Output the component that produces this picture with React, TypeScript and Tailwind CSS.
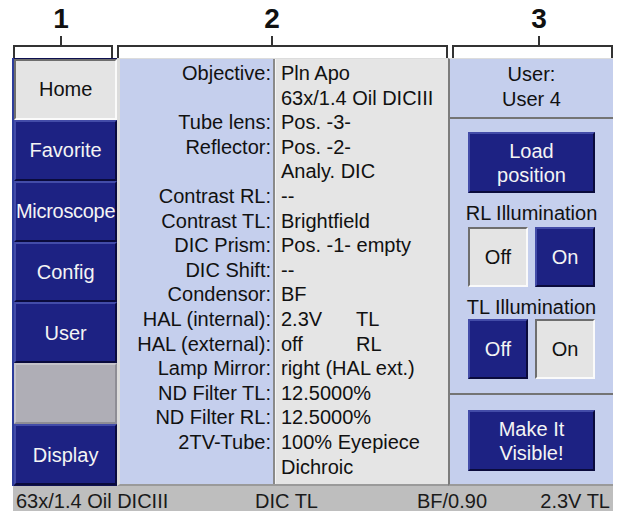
import React from 'react';

const blueBtn =
  'bg-[#1d2283] text-[#f4f4f4] border-2 border-t-[#434ca8] border-l-[#434ca8] border-b-[#0a0b3c] border-r-[#0a0b3c]';
const sunkenBtn =
  'bg-[#e4e4e4] text-[#111] border-2 border-t-[#6e6e6e] border-l-[#6e6e6e] border-b-[#fafafa] border-r-[#fafafa]';

type Row = { label: string; value: string; extra?: string };

const rows: Row[] = [
  { label: 'Objective:', value: 'Pln Apo' },
  { label: '', value: '63x/1.4 Oil DICIII' },
  { label: 'Tube lens:', value: 'Pos. -3-' },
  { label: 'Reflector:', value: 'Pos. -2-' },
  { label: '', value: 'Analy. DIC' },
  { label: 'Contrast RL:', value: '--' },
  { label: 'Contrast TL:', value: 'Brightfield' },
  { label: 'DIC Prism:', value: 'Pos. -1- empty' },
  { label: 'DIC Shift:', value: '--' },
  { label: 'Condensor:', value: 'BF' },
  { label: 'HAL (internal):', value: '2.3V', extra: 'TL' },
  { label: 'HAL (external):', value: 'off', extra: 'RL' },
  { label: 'Lamp Mirror:', value: 'right (HAL ext.)' },
  { label: 'ND Filter TL:', value: '12.5000%' },
  { label: 'ND Filter RL:', value: '12.5000%' },
  { label: '2TV-Tube:', value: '100% Eyepiece' },
  { label: '', value: 'Dichroic' },
];

const navItems = ['Home', 'Favorite', 'Microscope', 'Config', 'User', '', 'Display'];

const App: React.FC = () => {
  return (
    <div className="w-[623px] h-[511px] bg-white overflow-hidden font-['Liberation_Sans',Arial,sans-serif] text-[20px] text-[#111]">
      {/* annotation brackets */}
      <div className="h-[58px] flex pl-[13px] font-bold text-[28px] leading-[28px] text-[#111]">
        <div className="w-[100px] flex flex-col">
          <div className="h-[36px] pt-[5px] ml-[48px] w-0 flex justify-center">1</div>
          <div className="h-[9px] w-[2px] ml-[47px] bg-[#333]" />
          <div className="h-[13px] border-t-2 border-x-2 border-[#333]" />
        </div>
        <div className="w-[4px]" />
        <div className="w-[331px] flex flex-col">
          <div className="h-[36px] pt-[5px] ml-[155px] w-0 flex justify-center">2</div>
          <div className="h-[9px] w-[2px] ml-[154px] bg-[#333]" />
          <div className="h-[13px] border-t-2 border-x-2 border-[#333]" />
        </div>
        <div className="w-[4px]" />
        <div className="w-[161px] flex flex-col">
          <div className="h-[36px] pt-[5px] ml-[87px] w-0 flex justify-center">3</div>
          <div className="h-[9px] w-[2px] ml-[86px] bg-[#333]" />
          <div className="h-[13px] border-t-2 border-x-2 border-[#333]" />
        </div>
      </div>

      {/* screen */}
      <div className="ml-[12px] w-[601px] flex flex-col">
        <div className="h-[428px] flex">
          {/* left nav */}
          <div className="w-[105px] border-l-2 border-[#2c3c9c] bg-[#0e1050] py-[1px] grid grid-rows-7">
            {navItems.map((item, i) =>
              item === '' ? (
                <div key={i} className="bg-[#afaeb6] border-2 border-t-[#c4c3ca] border-l-[#c4c3ca] border-b-[#8e8d95] border-r-[#8e8d95]" />
              ) : (
                <div
                  key={item}
                  className={`flex items-center justify-center whitespace-nowrap ${item === 'Home' ? sunkenBtn : blueBtn} ${item === 'Microscope' ? 'tracking-[-0.3px]' : ''}`}
                >
                  {item}
                </div>
              )
            )}
          </div>

          {/* status table */}
          <div className="w-[331px] flex border-l-[3px] border-t border-b-2 border-l-[#dcdcdc] border-t-[#dcdcdc] border-b-[#9a9a9a] leading-[24.6px]">
            <div className="w-[153px] bg-[#c5cfed] pt-[2px] pr-[2px] text-right whitespace-nowrap">
              {rows.map((r, i) => (
                <div key={i} className="h-[24.6px]">{r.label}</div>
              ))}
            </div>
            <div className="w-[2px] bg-[#8a8a8a]" />
            <div className="w-[1px] bg-[#f5f5f5]" />
            <div className="flex-1 bg-[#e5e5e5] pt-[2px] pl-[5px] whitespace-nowrap">
              {rows.map((r, i) => (
                <div key={i} className="h-[24.6px] flex">
                  <span className={r.extra ? 'w-[75px]' : ''}>{r.value}</span>
                  {r.extra && <span>{r.extra}</span>}
                </div>
              ))}
            </div>
          </div>

          {/* right panel */}
          <div className="w-[165px] flex flex-col bg-[#c5cfed] border-l-2 border-t border-b-2 border-l-[#7c7c7c] border-t-[#dcdcdc] border-b-[#9a9a9a] leading-[24.6px] text-center">
            <div className="h-[58px] pt-[3px]">
              <div>User:</div>
              <div>User 4</div>
            </div>
            <div className="h-[2px] bg-[#747474]" />
            <div className="h-[274px] flex flex-col items-center pt-[13px]">
              <div className={`w-[127px] h-[61px] flex flex-col items-center justify-center leading-[24px] ${blueBtn}`}>
                <span>Load</span>
                <span>position</span>
              </div>
              <div className="mt-[8px] h-[24px] leading-[24px] whitespace-nowrap">RL Illumination</div>
              <div className="mt-[2px] flex gap-[7px]">
                <div className={`w-[60px] h-[60px] flex items-center justify-center ${sunkenBtn}`}>Off</div>
                <div className={`w-[60px] h-[60px] flex items-center justify-center ${blueBtn}`}>On</div>
              </div>
              <div className="mt-[9px] h-[23px] leading-[23px] whitespace-nowrap">TL Illumination</div>
              <div className="flex gap-[7px]">
                <div className={`w-[60px] h-[60px] flex items-center justify-center ${blueBtn}`}>Off</div>
                <div className={`w-[60px] h-[60px] flex items-center justify-center ${sunkenBtn}`}>On</div>
              </div>
            </div>
            <div className="h-[2px] bg-[#747474]" />
            <div className="flex-1 flex flex-col items-center pt-[15px]">
              <div className={`w-[127px] h-[61px] flex flex-col items-center justify-center leading-[24px] ${blueBtn}`}>
                <span>Make It</span>
                <span>Visible!</span>
              </div>
            </div>
          </div>
        </div>

        {/* status bar */}
        <div className="ml-[1px] h-[30px] bg-[#bebebe] flex pt-[3px] pl-[3px] pr-[3px] leading-[24.6px] whitespace-nowrap text-[#1a1a1a]">
          <span className="w-[239px]">63x/1.4 Oil DICIII</span>
          <span className="w-[162px]">DIC TL</span>
          <span>BF/0.90</span>
          <span className="ml-auto">2.3V TL</span>
        </div>
      </div>
    </div>
  );
};

export default App;
